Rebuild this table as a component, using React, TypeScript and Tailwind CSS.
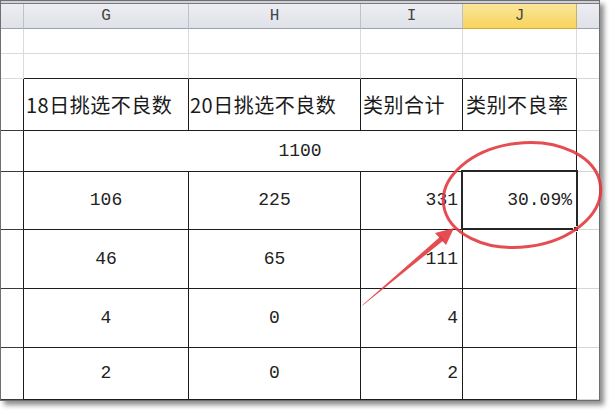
import type { ReactNode } from "react";

const cjk = "font-['Noto_Sans_CJK_SC','Noto_Sans',sans-serif]";
const mono = "font-['Liberation_Mono','Noto_Sans_CJK_SC',monospace]";

function Head({ children, active }: { children: ReactNode; active?: boolean }) {
  return (
    <div
      className={
        active
          ? `flex items-center justify-center border-r border-b border-r-[#c9b06a] border-b-[#d8a93a] bg-[linear-gradient(180deg,#fbe69a,#f7d45c)] text-[16px] text-[#444] ${mono}`
          : `flex items-center justify-center border-r border-b border-r-[#bcc1ca] border-b-[#9ca2ad] bg-[linear-gradient(180deg,#eceef2,#dfe2e8)] text-[16px] text-[#444] ${mono}`
      }
    >
      {children}
    </div>
  );
}

export default function App() {
  const lightCell = "border-r border-b border-[#dadada] bg-white";
  const sideCell = "border-r border-b border-r-[#1c1c1c] border-b-[#3a3a3a] bg-white";
  const tableCell = "border-r border-b border-[#1c1c1c] bg-white";
  const edgeCell = "border-b border-[#d6d6d6] bg-white";
  const topEdge = "border-r border-b border-r-[#dadada] border-b-[#1c1c1c]";

  const rows = [
    { h: "h-[58px]", g: "106", hh: "225", i: "331", j: "30.09%" },
    { h: "h-[59px]", g: "46", hh: "65", i: "111", j: "" },
    { h: "h-[59px]", g: "4", hh: "0", i: "4", j: "" },
    { h: "h-[52px]", g: "2", hh: "0", i: "2", j: "" },
  ];

  return (
    <div className="relative h-[411px] w-[611px] overflow-hidden bg-white">
      <div className="h-[401px] w-[600px] overflow-hidden border border-[#6e6e6e] bg-white shadow-[4px_4px_5px_rgba(0,0,0,0.45)]">
        <div className="h-[2px] bg-[#cfd2d8]" />
        <div className="h-px bg-[#7b7b7b]" />

        <div className="grid grid-cols-[23px_165px_172px_102px_114px_1fr]">
          {/* column headers */}
          <div className="h-[25px] border-r border-b border-r-[#bcc1ca] border-b-[#9ca2ad] bg-[linear-gradient(180deg,#eceef2,#dfe2e8)]" />
          <Head>G</Head>
          <Head>H</Head>
          <Head>I</Head>
          <Head active>J</Head>
          <div className="border-b border-[#9ca2ad] bg-[linear-gradient(180deg,#eceef2,#dfe2e8)]" />

          {/* two empty rows */}
          {[0, 1].map((r) => (
            <div key={r} className="contents">
              <div className={`h-[25px] ${lightCell}`} />
              <div className={r === 1 ? topEdge : lightCell} />
              <div className={r === 1 ? topEdge : lightCell} />
              <div className={r === 1 ? topEdge : lightCell} />
              <div className={r === 1 ? topEdge : lightCell} />
              <div className={edgeCell} />
            </div>
          ))}

          {/* table header */}
          <div className={`h-[52px] ${sideCell}`} />
          <div className={`flex items-center pl-[2px] text-[20px] tracking-[0.5px] text-[#1a1a1a] ${cjk} ${tableCell}`}>
            18日挑选不良数
          </div>
          <div className={`flex items-center pl-[1px] text-[20px] tracking-[0.5px] text-[#1a1a1a] ${cjk} ${tableCell}`}>
            20日挑选不良数
          </div>
          <div className={`flex items-center pl-[2px] text-[20px] tracking-[0.5px] text-[#1a1a1a] ${cjk} ${tableCell}`}>
            类别合计
          </div>
          <div className={`flex items-center pl-[3px] text-[20px] tracking-[0.5px] text-[#1a1a1a] ${cjk} ${tableCell}`}>
            类别不良率
          </div>
          <div className={edgeCell} />

          {/* merged total */}
          <div className={`h-[41px] ${sideCell}`} />
          <div className={`col-span-4 flex items-center justify-center text-[18px] text-[#222] ${mono} ${tableCell}`}>
            1100
          </div>
          <div className={edgeCell} />

          {rows.map((row, idx) => (
            <div key={idx} className="contents">
              <div className={`${row.h} ${sideCell}`} />
              <div className={`flex items-center justify-center text-[18px] text-[#222] ${mono} ${tableCell}`}>
                {row.g}
              </div>
              <div className={`flex items-center justify-center text-[18px] text-[#222] ${mono} ${tableCell}`}>
                {row.hh}
              </div>
              <div className={`flex items-center justify-end pr-[4px] text-[18px] text-[#222] ${mono} ${tableCell}`}>
                {row.i}
              </div>
              <div className={`flex items-center justify-end pr-[4px] text-[18px] text-[#222] ${mono} ${tableCell}`}>
                {row.j}
              </div>
              <div className={edgeCell} />
            </div>
          ))}
        </div>
      </div>

      {/* selected cell */}
      <div className="absolute left-[461px] top-[170px] h-[60px] w-[117px] border-2 border-[#262626]" />
      <div className="absolute left-[573px] top-[226px] h-[6px] w-[6px] border border-white bg-[#262626]" />

      {/* annotation */}
      <svg className="pointer-events-none absolute left-0 top-0" width="611" height="411" viewBox="0 0 611 411">
        <ellipse
          cx="522"
          cy="195"
          rx="79"
          ry="52"
          transform="rotate(-7 522 195)"
          fill="none"
          stroke="#e23a3f"
          strokeWidth="3"
          opacity="0.9"
        />
        <polygon points="362,306 363.5,304 441,236 444,240" fill="#e23a3f" opacity="0.9" />
        <polygon points="454,228 435,233 446,245" fill="#e23a3f" opacity="0.9" />
      </svg>
    </div>
  );
}
